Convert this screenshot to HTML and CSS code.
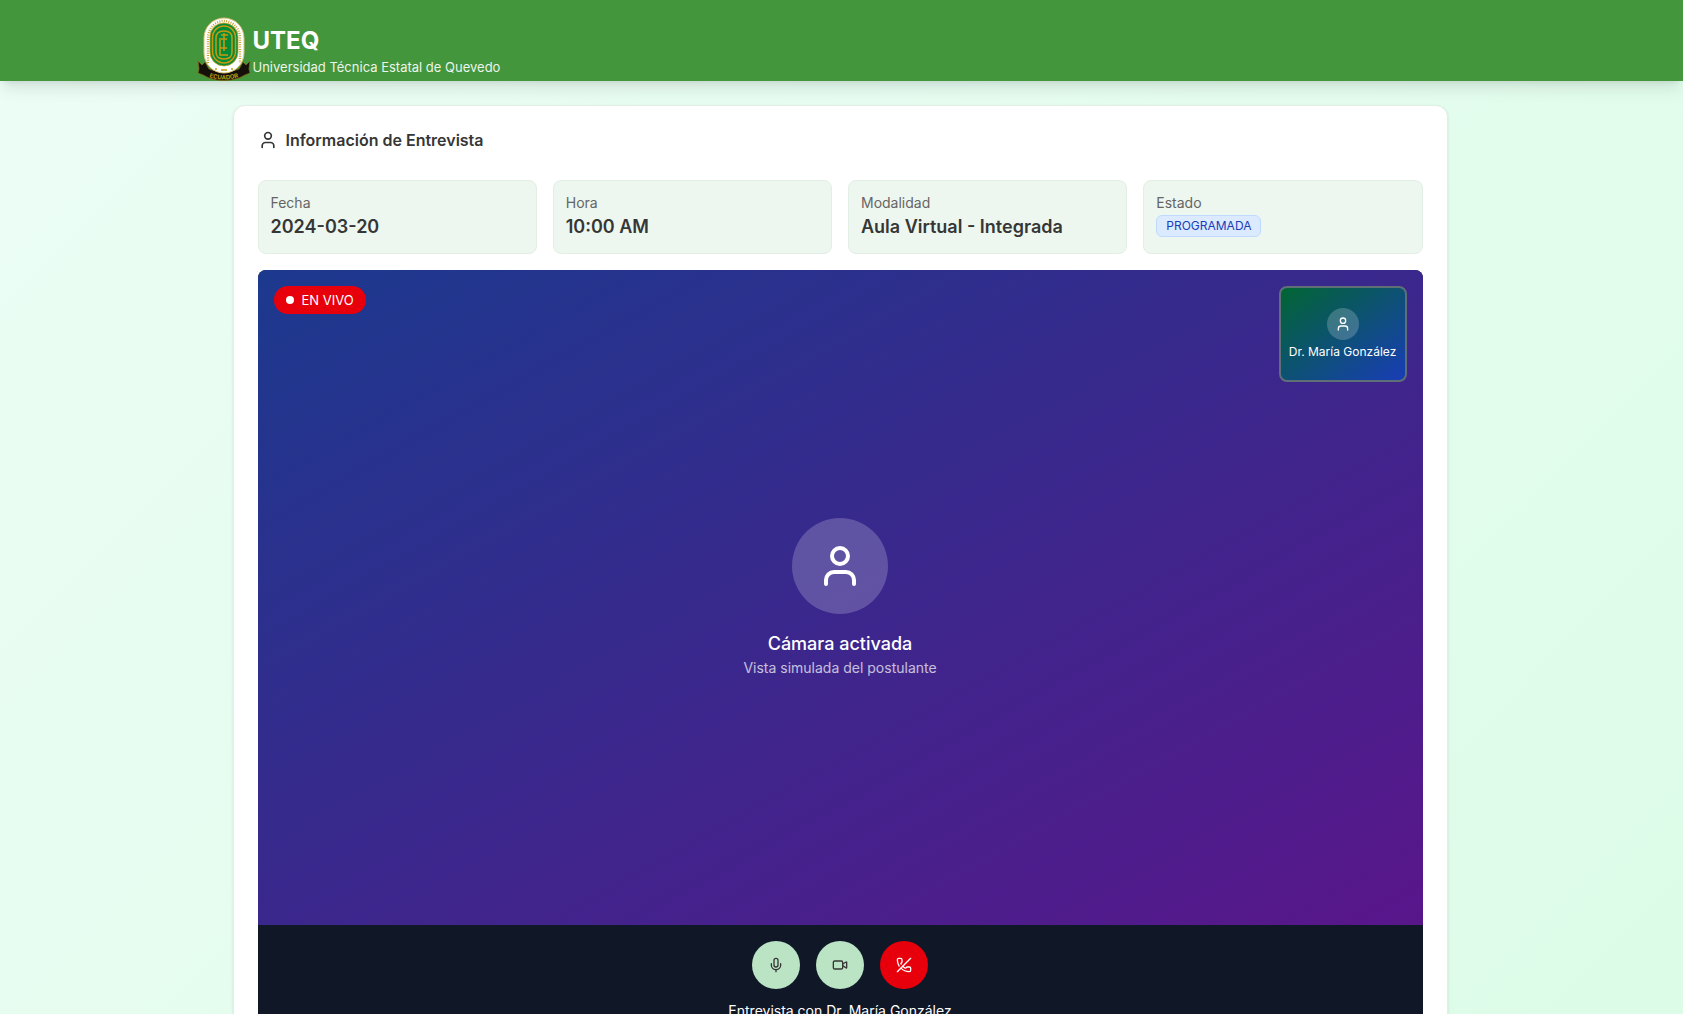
FILE: index.html
```html
<!DOCTYPE html>
<html lang="es">
<head>
<meta charset="utf-8">
<meta name="viewport" content="width=device-width, initial-scale=1">
<title>UTEQ - Entrevista</title>
<link rel="stylesheet" href="styles.css">
</head>
<body>
<svg class="sprite" aria-hidden="true">
  <symbol id="user" viewBox="0 0 24 24"><path d="M19 21v-2a4 4 0 0 0-4-4H9a4 4 0 0 0-4 4v2"/><circle cx="12" cy="7" r="4"/></symbol>
</svg>
<header class="site-header">
  <div class="brand">
    <svg class="crest" viewBox="0 0 54 64" aria-hidden="true">
      <path d="M1 44l4 4 3-3 4 7q15 6 30 0l4-7 3 3 4-4-1 8 1 4-5 2-6 3q-15 5-30 0l-6-3-5-2 1-4z" fill="#15110a" stroke="#8a6a12" stroke-width=".7"/>
      <rect x="7" y="1" width="40" height="55" rx="20" fill="#fff" stroke="#d9c074" stroke-width="1"/>
      <path d="M11 46V21a16 17 0 0 1 32 0v25" fill="none" stroke="#c9a63a" stroke-width="2.400" stroke-dasharray="1 1.300"/>
      <rect x="13" y="6" width="28" height="43" rx="14" fill="#078a38" stroke="#c9a227" stroke-width=".8"/>
      <g fill="none" stroke="#c79a10" stroke-width="1.500">
        <rect x="15.500" y="9" width="23" height="37" rx="11.500"/>
        <path d="M19 21v14q0 7 8 7t8-7V21q0-7-8-7t-8 7"/>
        <path d="M23 21v17h8M23 31h7M27 16v18M24 18h7M24 22h6"/>
      </g>
      <path d="M18 52h2M24 53h6M34 52h2" stroke="#c79a10" stroke-width="1.300"/>
      <path id="ribbon" d="M9 59q18 7 36 0" fill="none"/>
      <text class="crest-text"><textPath href="#ribbon" startOffset="50%">ECUADOR</textPath></text>
    </svg>
    <div class="brand-text">
      <h1 class="brand-name">UTEQ</h1>
      <p class="brand-sub">Universidad Técnica Estatal de Quevedo</p>
    </div>
  </div>
</header>
<main class="page">
  <section class="card">
    <h2 class="card-title"><svg class="icon icon-md"><use href="#user"/></svg>Información de Entrevista</h2>
    <dl class="facts">
      <div class="fact"><dt>Fecha</dt><dd>2024-03-20</dd></div>
      <div class="fact"><dt>Hora</dt><dd>10:00 AM</dd></div>
      <div class="fact"><dt>Modalidad</dt><dd>Aula Virtual - Integrada</dd></div>
      <div class="fact"><dt>Estado</dt><dd class="status"><span class="badge">PROGRAMADA</span></dd></div>
    </dl>
    <div class="call">
      <div class="video">
        <div class="live"><span class="dot"></span>EN VIVO</div>
        <div class="self-view">
          <span class="avatar avatar-sm"><svg class="icon icon-sm"><use href="#user"/></svg></span>
          <p>Dr. María González</p>
        </div>
        <div class="camera">
          <span class="avatar"><svg class="icon icon-lg"><use href="#user"/></svg></span>
          <p class="camera-title">Cámara activada</p>
          <p class="camera-sub">Vista simulada del postulante</p>
        </div>
      </div>
      <div class="controls">
        <div class="buttons">
          <button type="button" class="round" aria-label="Micrófono"><svg class="icon icon-sm" viewBox="0 0 24 24"><path d="M12 19v3"/><path d="M19 10v2a7 7 0 0 1-14 0v-2"/><rect x="9" y="2" width="6" height="13" rx="3"/></svg></button>
          <button type="button" class="round" aria-label="Cámara"><svg class="icon icon-sm" viewBox="0 0 24 24"><path d="m16 13 5.223 3.482a.5.5 0 0 0 .777-.416V7.870a.5.5 0 0 0-.752-.432L16 10.500"/><rect x="2" y="6" width="14" height="12" rx="2"/></svg></button>
          <button type="button" class="round hangup" aria-label="Finalizar llamada"><svg class="icon icon-sm" viewBox="0 0 24 24"><path d="M10.100 13.900a14 14 0 0 0 3.732 2.668 1 1 0 0 0 1.213-.303l.355-.465A2 2 0 0 1 17 15h3a2 2 0 0 1 2 2v3a2 2 0 0 1-2 2 18 18 0 0 1-12.728-5.272"/><path d="M22 2 2 22"/><path d="M4.760 13.582A18 18 0 0 1 2 4a2 2 0 0 1 2-2h3a2 2 0 0 1 2 2v3a2 2 0 0 1-.8 1.600l-.468.351a1 1 0 0 0-.292 1.233 14 14 0 0 0 .244.473"/></svg></button>
        </div>
        <p class="caption">Entrevista con Dr. María González</p>
      </div>
    </div>
  </section>
</main>
</body>
</html>
```
FILE: styles.css
```css
* { box-sizing: border-box; }
body, h1, h2, p, dl, dd { margin: 0; }
body {
  min-height: 100vh;
  font-family: Inter, "Liberation Sans", sans-serif;
  font-size: 14px;
  line-height: 20px;
  color: #363636;
  background: linear-gradient(135deg, #ecfdf5, #dcfce7);
}
.sprite { display: none; }
.icon { fill: none; stroke: currentColor; stroke-width: 2; stroke-linecap: round; stroke-linejoin: round; display: block; }
.icon-sm { width: 16px; height: 16px; }
.icon-md { width: 20px; height: 20px; }
.icon-lg { width: 48px; height: 48px; }

.site-header {
  position: relative;
  background: #43963b;
  color: #fff;
  box-shadow: 0 10px 15px -3px rgb(0 0 0 / .1), 0 4px 6px -4px rgb(0 0 0 / .1);
}
.brand { max-width: 1290px; margin: 0 auto; padding-top: 17px; display: flex; align-items: flex-end; gap: 2px; }
.crest { width: 54px; height: 64px; }
.crest-text { font-size: 6px; font-weight: 700; fill: #c79a10; text-anchor: middle; }
.brand-text { padding-bottom: 4px; }
.brand-name { font-size: 24px; line-height: 32px; font-weight: 700; }
.brand-sub { font-size: 13px; line-height: 20px; opacity: .9; }

.page { max-width: 1280px; margin: 0 auto; padding: 24px 34px 24px 31px; }
.card { background: #fff; border: 1px solid #e2efe5; border-radius: 12px; padding: 24px; box-shadow: 0 1px 3px rgb(0 0 0 / .1); }
.card-title { display: flex; align-items: center; gap: 8px; font-size: 16px; line-height: 20px; font-weight: 600; margin-bottom: 30px; }
.facts { display: grid; grid-template-columns: repeat(4, 1fr); gap: 16px; margin-bottom: 16px; }
.fact { background: #edf7ef; border: 1px solid #e2efe5; border-radius: 8px; padding: 12px; min-height: 74px; }
.fact dt { color: #656565; }
.fact dd { font-size: 18px; line-height: 28px; font-weight: 600; }
.fact .status { line-height: 20px; display: flex; padding-top: 2px; }
.badge { font-size: 12px; line-height: 16px; font-weight: 400; color: #193cb8; background: #dbeafe; border: 1px solid #bedbff; border-radius: 6px; padding: 2px 9px; }

.call { border-radius: 8px; overflow: hidden; background: #101828; color: #fff; }
.video { position: relative; aspect-ratio: 16 / 9; display: grid; place-items: center; background: linear-gradient(to bottom right, #1c398e, #59168b); }
.live { position: absolute; top: 16px; left: 16px; display: flex; align-items: center; gap: 8px; padding: 4px 12px; background: #e7000b; border-radius: 14px; font-size: 13px; }
.dot { width: 8px; height: 8px; border-radius: 50%; background: #fff; }
.self-view {
  position: absolute; top: 16px; right: 16px; width: 128px; height: 96px;
  display: flex; flex-direction: column; align-items: center; justify-content: center; gap: 4px;
  font-size: 12px; line-height: 16px;
  border: 2px solid #5f6f78; border-radius: 8px;
  background: linear-gradient(to bottom right, #016630, #193cb8) border-box;
}
.avatar { width: 96px; height: 96px; border-radius: 50%; display: grid; place-items: center; background: rgb(255 255 255 / .2); }
.avatar-sm { width: 32px; height: 32px; }
.camera { display: flex; flex-direction: column; align-items: center; }
.camera-title { font-size: 18px; line-height: 28px; font-weight: 500; margin-top: 16px; }
.camera-sub { opacity: .7; }
.controls { padding: 16px; }
.buttons { display: flex; justify-content: center; gap: 16px; }
.round { width: 48px; height: 48px; padding: 0; border: 0; border-radius: 50%; display: grid; place-items: center; background: #bbe4c5; color: #363636; }
.hangup { background: #e7000b; color: #fff; }
.caption { text-align: center; margin-top: 12px; }
```
